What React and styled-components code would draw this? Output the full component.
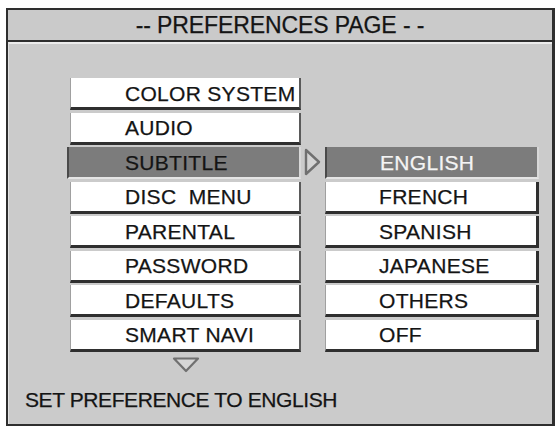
import React from 'react'
import styled, { createGlobalStyle } from 'styled-components'

const GlobalStyle = createGlobalStyle`
  html, body {
    margin: 0;
    padding: 0;
    background: #ffffff;
  }
  * {
    box-sizing: border-box;
  }
`

const settings = ['COLOR SYSTEM', 'AUDIO', 'SUBTITLE', 'DISC\u00a0 MENU', 'PARENTAL', 'PASSWORD', 'DEFAULTS', 'SMART NAVI']
const languages = ['ENGLISH', 'FRENCH', 'SPANISH', 'JAPANESE', 'OTHERS', 'OFF']

export default function App() {
    const activeSetting = 'SUBTITLE'
    const activeLanguage = 'ENGLISH'

    return (
        <>
            <GlobalStyle />
            <Frame>
                <Header>-- PREFERENCES PAGE - -</Header>
                <Body>
                    <Menus>
                        <LeftColumn>
                            <List>
                                {settings.map((item) => (
                                    <Item key={item} $side="left" $active={item === activeSetting}>
                                        {item}
                                    </Item>
                                ))}
                            </List>
                            <DownArrow width="28" height="16" viewBox="0 0 28 16">
                                <polygon points="2,1.5 26,1.5 14,14" fill="#d6d6d6" stroke="#707070" strokeWidth="2.2" strokeLinejoin="round" />
                            </DownArrow>
                        </LeftColumn>
                        <Pointer width="18" height="28" viewBox="0 0 18 28">
                            <polygon points="2,2 15,14 2,26" fill="#d4d4d4" stroke="#707070" strokeWidth="2.4" strokeLinejoin="round" />
                        </Pointer>
                        <RightColumn>
                            {languages.map((item) => (
                                <Item key={item} $side="right" $active={item === activeLanguage}>
                                    {item}
                                </Item>
                            ))}
                        </RightColumn>
                    </Menus>
                    <Footer>SET PREFERENCE TO ENGLISH</Footer>
                </Body>
            </Frame>
        </>
    )
}

const Frame = styled.div`
    display: flex;
    flex-direction: column;
    width: 549px;
    height: 418px;
    margin: 8px 0 0 6px;
    border: 2px solid #2e2e2e;
    border-right-width: 3px;
    background-color: #cbcbcb;
    font-family: "Liberation Sans", Arial, sans-serif;
    color: #141414;
    -webkit-text-stroke: 0.25px currentColor;
`

const Header = styled.div`
    height: 32px;
    display: flex;
    align-items: center;
    justify-content: center;
    border-bottom: 2px solid #2e2e2e;
    background-color: #cacaca;
    font-size: 23px;
    letter-spacing: -0.1px;
    padding-top: 1px;
`

const Body = styled.div`
    flex: 1;
    display: flex;
    flex-direction: column;
    border-top: 2px solid #ececec;
    border-left: 1px solid #e2e2e2;
    background-color: #cbcbcb;
`

const Menus = styled.div`
    display: flex;
    align-items: flex-start;
    padding: 34px 0 0 61px;
`

const LeftColumn = styled.div`
    display: flex;
    flex-direction: column;
    align-items: center;
    width: 231px;
`

const List = styled.div`
    display: flex;
    flex-direction: column;
    gap: 2.5px;
    width: 100%;
`

const RightColumn = styled.div`
    display: flex;
    flex-direction: column;
    gap: 2.5px;
    width: 214px;
    margin-top: 69px;
`

const Item = styled.div`
    height: 32px;
    display: flex;
    align-items: center;
    font-size: 21px;
    letter-spacing: 0.3px;
    white-space: nowrap;
    background-color: #ffffff;
    border-left: 1px solid #a0a0a0;
    border-bottom: 3px solid #2f2f2f;
    padding-top: 2px;
    ${({ $side }) => $side === 'left' && `
        padding-left: 54px;
        border-right: 2px solid #5a5a5a;
    `}
    ${({ $side }) => $side === 'right' && `
        padding-left: 53px;
        border-right: 3px solid #2f2f2f;
    `}
    ${({ $active }) => $active && `
        background-color: #7c7c7c;
        border-left: 2px solid #4a4a4a;
        border-bottom: 2px solid #e4e4e4;
        border-right: 2px solid #d8d8d8;
    `}
    ${({ $active, $side }) => $active && $side === 'left' && `
        margin-left: -3px;
        padding-left: 56px;
    `}
    ${({ $active, $side }) => $active && $side === 'right' && `
        color: #f4f4f4;
    `}
`

const Pointer = styled.svg`
    display: block;
    margin: 70px 3px 0 3px;
    flex-shrink: 0;
`

const DownArrow = styled.svg`
    display: block;
    margin-top: 5px;
`

const Footer = styled.div`
    padding: 0 0 0 16px;
    margin-top: 15px;
    font-size: 21px;
    line-height: 24px;
    letter-spacing: -0.4px;
`
